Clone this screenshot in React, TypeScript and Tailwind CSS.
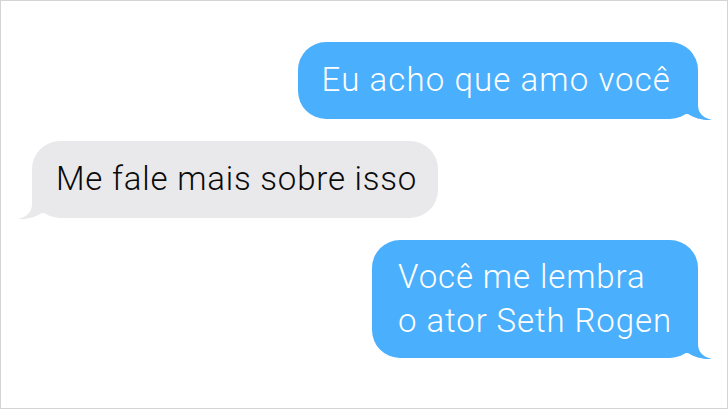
import React from "react";

function TailRight({ color }: { color: string }) {
  return (
    <svg
      className="absolute"
      style={{ right: -15, bottom: -2 }}
      width="35"
      height="40"
      viewBox="0 0 35 40"
    >
      <path
        d="M20 0 L20 24 C20 32 25 37 34 39 C25 39.5 16 37 10 33 L4 33 L4 0 Z"
        fill={color}
      />
    </svg>
  );
}

function TailLeft({ color }: { color: string }) {
  return (
    <svg
      className="absolute"
      style={{ left: -15, bottom: -2 }}
      width="35"
      height="40"
      viewBox="0 0 35 40"
    >
      <g transform="translate(35 0) scale(-1 1)">
        <path
          d="M20 0 L20 24 C20 32 25 37 34 39 C25 39.5 16 37 10 33 L4 33 L4 0 Z"
          fill={color}
        />
      </g>
    </svg>
  );
}

export default function App() {
  const font = { fontFamily: "Roboto, 'Noto Sans', sans-serif" };
  return (
    <div
      className="w-[728px] h-[409px] border border-[#d4d4d4] bg-white flex flex-col pt-[41px] gap-[22px] overflow-hidden"
      style={font}
    >
      <div className="self-end mr-[29px] relative">
        <TailRight color="#4aaffc" />
        <div className="relative bg-[#4aaffc] rounded-[28px] pl-[24px] pr-[27px] pt-[16px] pb-[17px] text-white text-[33px] leading-[44px] font-light tracking-[1.1px] whitespace-nowrap">
          Eu acho que amo você
        </div>
      </div>
      <div className="self-start ml-[31px] relative">
        <TailLeft color="#e9e9eb" />
        <div className="relative bg-[#e9e9eb] rounded-[28px] pl-[24px] pr-[21px] pt-[16px] pb-[17px] text-[#0a0a0a] text-[33px] leading-[44px] font-light tracking-[0.8px] whitespace-nowrap">
          Me fale mais sobre isso
        </div>
      </div>
      <div className="self-end mr-[29px] relative">
        <TailRight color="#4aaffc" />
        <div className="relative bg-[#4aaffc] rounded-[28px] pl-[26px] pr-[26px] pt-[15px] pb-[15px] text-white text-[33px] leading-[44px] font-light tracking-[0.9px] whitespace-nowrap">
          Você me lembra
          <br />o ator Seth Rogen
        </div>
      </div>
    </div>
  );
}
